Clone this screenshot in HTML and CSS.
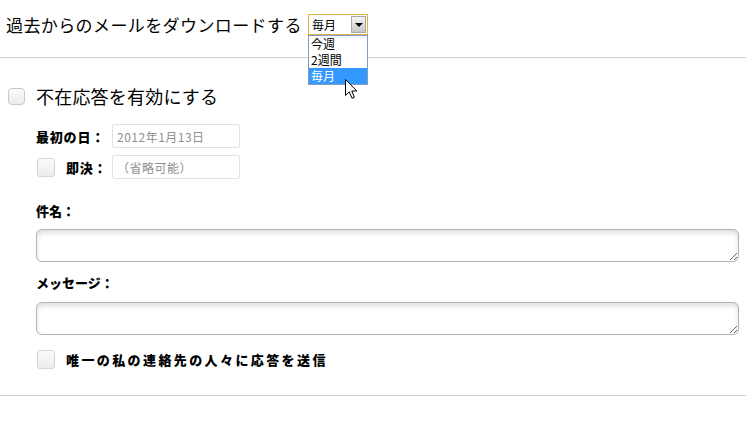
FILE: index.html
```html
<!DOCTYPE html>
<html lang="ja">
<head>
<meta charset="utf-8">
<link rel="stylesheet" href="styles.css">
</head>
<body>
<div class="header">
  <span class="title">過去からのメールをダウンロードする</span>
  <div class="select">
    <div class="select-box">
      <span class="select-value">毎月</span>
      <span class="select-btn"><span class="tri"></span></span>
    </div>
    <ul class="dropdown">
      <li>今週</li>
      <li>2週間</li>
      <li class="active">毎月</li>
    </ul>
    <svg class="cursor" width="13" height="21" viewBox="0 0 13 21">
      <path d="M0.5 0.5 L0.5 16.5 L4.3 12.8 L7 19.3 L9.4 18.3 L6.8 12 L11.8 12 Z" fill="#fff" stroke="#000" stroke-width="1" stroke-linejoin="miter"/>
    </svg>
  </div>
</div>

<div class="section">
  <div class="enable-row">
    <span class="check big"></span>
    <span class="enable-label">不在応答を有効にする</span>
  </div>

  <div class="form">
    <div class="row">
      <span class="label">最初の日：</span>
      <span class="input"><span class="ph">2012年1月13日</span></span>
    </div>
    <div class="row row2">
      <span class="check"></span>
      <span class="label short">即決：</span>
      <span class="input"><span class="ph">（省略可能）</span></span>
    </div>

    <div class="field-label subject-label">件名：</div>
    <textarea class="area"></textarea>

    <div class="field-label msg-label">メッセージ：</div>
    <textarea class="area area2"></textarea>

    <div class="contacts-row">
      <span class="check"></span>
      <span class="contacts-label">唯一の私の連絡先の人々に応答を送信</span>
    </div>
  </div>
</div>
</body>
</html>
```

FILE: styles.css
```css
* { box-sizing: border-box; }
html, body { margin: 0; padding: 0; background: #fff; }
body {
  font-family: "Noto Sans CJK JP", "Liberation Sans", sans-serif;
  color: #111;
  width: 746px;
  height: 436px;
  overflow: hidden;
}

.header {
  height: 58px;
  padding: 0 0 8px 6px;
  display: flex;
  align-items: center;
  gap: 8px;
  border-bottom: 1px solid #cfcfcf;
}
.title {
  font-size: 17px;
  letter-spacing: 0.4px;
  line-height: 20px;
  width: 294px;
  white-space: nowrap;
  color: #000;
}

.select {
  position: relative;
  width: 60px;
  height: 21px;
}
.select-box {
  height: 21px;
  border: 1px solid #e0b24a;
  display: flex;
  align-items: center;
  justify-content: space-between;
  padding: 0 1px 0 3px;
  background: #fff;
}
.select-value { font-size: 12px; line-height: 14px; color: #000; }
.select-btn {
  width: 15px;
  height: 17px;
  border: 1px solid #a8a8a8;
  background: linear-gradient(#f4f4f4, #c9c9c9);
  display: flex;
  align-items: center;
  justify-content: center;
}
.tri {
  width: 0; height: 0;
  border-left: 4px solid transparent;
  border-right: 4px solid transparent;
  border-top: 4px solid #000;
}
.dropdown {
  position: absolute;
  top: 21px;
  left: 0;
  width: 60px;
  margin: 0;
  padding: 0;
  list-style: none;
  border: 1px solid #7f9db9;
  background: #fff;
}
.dropdown li {
  height: 16px;
  font-size: 12px;
  line-height: 16px;
  padding-left: 2px;
  color: #000;
}
.dropdown li.active { background: #3399ff; color: #fff; }
.cursor {
  position: absolute;
  left: 37px;
  top: 65px;
}

.section {
  padding-top: 29px;
  padding-bottom: 26px;
  border-bottom: 1px solid #cfcfcf;
}
.enable-row {
  display: flex;
  align-items: center;
  height: 18px;
  padding-left: 8px;
}
.enable-label {
  margin-left: 11px;
  font-size: 18px;
  line-height: 20px;
  letter-spacing: 0.2px;
  color: #000;
}

.check {
  width: 18px;
  height: 19px;
  border: 1px solid #d6d6d6;
  border-radius: 3px;
  background: linear-gradient(#fbfbfb, #ececec);
  flex: none;
}
.check.big { width: 17px; height: 17px; border-color: #c8c8c8; border-radius: 4px; }

.form {
  padding: 0 7px 0 36px;
  margin-top: 19px;
}
.row {
  display: flex;
  align-items: center;
  height: 24px;
}
.row2 { margin-top: 7px; padding-left: 1px; }
.label {
  font-size: 13px;
  font-weight: 900;
  width: 76px;
  letter-spacing: 0.8px;
  white-space: nowrap;
  color: #000;
}
.label.short { width: 46px; margin-left: 11px; }
.input {
  width: 128px;
  height: 24px;
  border: 1px solid #e2e2e2;
  border-radius: 2px;
  display: flex;
  align-items: center;
  padding-left: 4px;
}
.ph { font-size: 12px; color: #8f8f8f; letter-spacing: 0.5px; white-space: nowrap; }

.field-label {
  font-size: 13px;
  font-weight: 900;
  line-height: 16px;
  height: 16px;
  color: #000;
}
.subject-label { margin-top: 24px; }
.msg-label { margin-top: 13px; }
.area {
  display: block;
  width: 703px;
  height: 33px;
  margin-top: 10px;
  border: 1px solid #b4b4b4;
  border-radius: 6px;
  box-shadow: inset 0 3px 5px rgba(0,0,0,0.13), 0 0 2px rgba(0,0,0,0.06);
  background: #fff;
  resize: vertical;
  font: inherit;
  padding: 0;
  outline: none;
}
.area2 { margin-top: 11px; }

.contacts-row {
  display: flex;
  align-items: center;
  height: 19px;
  margin-top: 15px;
  padding-left: 1px;
}
.contacts-label {
  margin-left: 11px;
  font-size: 13px;
  font-weight: 900;
  letter-spacing: 2.4px;
  white-space: nowrap;
  color: #000;
}
```
